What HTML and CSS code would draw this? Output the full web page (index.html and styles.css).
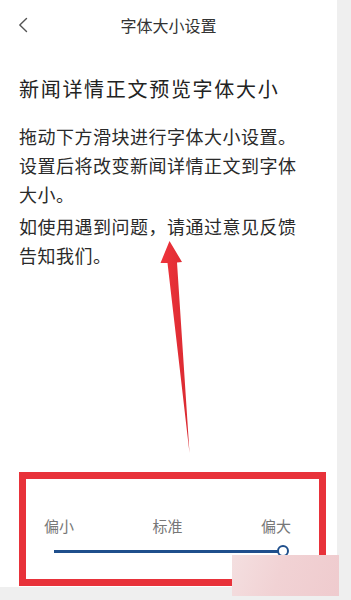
FILE: index.html
```html
<!DOCTYPE html>
<html lang="zh">
<head>
<meta charset="utf-8">
<title>字体大小设置</title>
<link rel="stylesheet" href="styles.css">
</head>
<body>
<div class="app">
  <header class="nav">
    <svg class="back" width="12" height="16" viewBox="0 0 12 16"><path d="M8.5 1.5 L1.8 8 L8.5 14.5" fill="none" stroke="#555" stroke-width="1.4" stroke-linecap="round" stroke-linejoin="round"/></svg>
    <div class="title">字体大小设置</div>
  </header>
  <main class="content">
    <h1 class="heading">新闻详情正文预览字体大小</h1>
    <p class="para">拖动下方滑块进行字体大小设置。<br>设置后将改变新闻详情正文到字体<br>大小。</p>
    <p class="para para2">如使用遇到问题，请通过意见反馈<br>告知我们。</p>
  </main>
  <section class="slider-box">
    <div class="labels">
      <span>偏小</span><span>标准</span><span>偏大</span>
    </div>
    <div class="track">
      <div class="line"></div>
      <div class="thumb"></div>
    </div>
  </section>
  <svg class="arrow" width="337" height="587" viewBox="0 0 337 587">
    <defs>
      <linearGradient id="ag" x1="0" y1="0" x2="1" y2="0">
        <stop offset="0" stop-color="#f0343c"/>
        <stop offset="1" stop-color="#d92a31"/>
      </linearGradient>
    </defs>
    <polygon points="169.5,241 182,262 177,262.5 189.5,453 167.5,263 160.5,263" fill="url(#ag)"/>
  </svg>
  <div class="watermark"></div>
</div>
</body>
</html>
```
FILE: styles.css
```css
html, body {
  margin: 0;
  padding: 0;
}
body {
  background: #efefef;
  width: 351px;
  height: 600px;
  overflow: hidden;
  font-family: "Noto Sans CJK SC", "Noto Sans", sans-serif;
}
.app {
  position: relative;
  width: 337px;
  height: 587px;
  background: #fff;
  display: flex;
  flex-direction: column;
}
.nav {
  height: 50px;
  display: flex;
  align-items: center;
  position: relative;
}
.back {
  margin-left: 18px;
}
.title {
  position: absolute;
  left: 0;
  right: 0;
  text-align: center;
  font-size: 16px;
  color: #333;
  line-height: 50px;
  pointer-events: none;
}
.content {
  padding: 0 19px;
}
.heading {
  margin: 24px 0 0;
  font-size: 20px;
  line-height: 30px;
  font-weight: 400;
  letter-spacing: 1.7px;
  color: #222;
}
.para {
  margin: 18px 0 0;
  font-size: 18px;
  line-height: 29px;
  letter-spacing: 0.5px;
  color: #2a2a2a;
}
.para2 {
  margin-top: 3px;
}
.slider-box {
  margin: auto 11px 1px 19px;
  height: 100px;
  border: 7px solid #e8323a;
  box-sizing: content-box;
  position: relative;
}
.labels {
  display: flex;
  justify-content: space-between;
  padding: 36px 28px 0 18px;
  font-size: 15px;
  line-height: 22px;
  color: #777;
}
.track {
  position: relative;
  height: 12px;
  margin: 8px 0 0 28px;
  width: 235px;
}
.line {
  position: absolute;
  left: 0;
  right: 7px;
  top: 5px;
  height: 2.5px;
  background: #1f4f8c;
}
.thumb {
  position: absolute;
  right: 0;
  top: 0;
  width: 8px;
  height: 8px;
  border: 2.5px solid #1f4f8c;
  border-radius: 50%;
  background: #fff;
}
.arrow {
  position: absolute;
  left: 0;
  top: 0;
  pointer-events: none;
}
.watermark {
  position: absolute;
  left: 232px;
  top: 555px;
  width: 107px;
  height: 41px;
  background: linear-gradient(110deg, #f4dfe0 0%, #f1d2d4 45%, #efcbce 100%);
}
```
